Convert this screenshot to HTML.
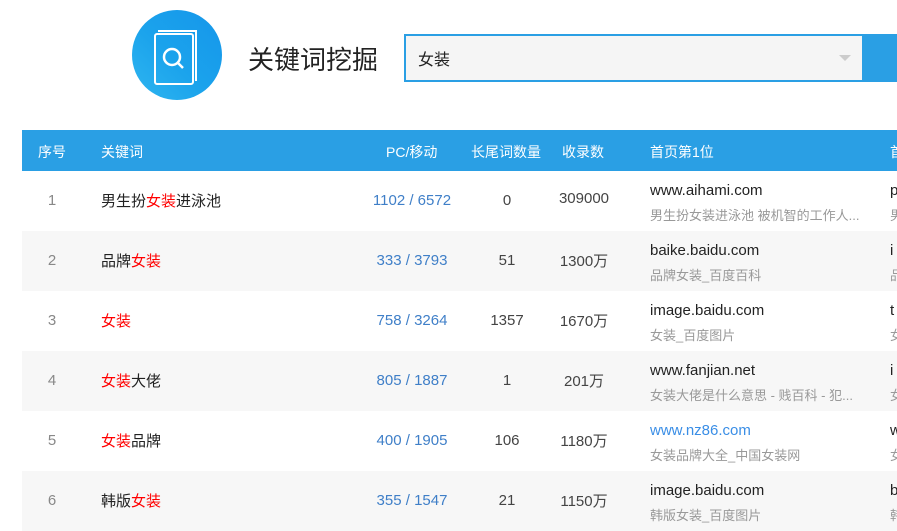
<!DOCTYPE html>
<html><head><meta charset="utf-8"><style>
*{margin:0;padding:0;box-sizing:border-box}
body{width:897px;height:517px;overflow:hidden;background:#fff;font-family:"Liberation Sans","Noto Sans CJK SC",sans-serif;position:relative}
.logo{position:absolute;left:132px;top:10px;width:90px;height:90px;border-radius:50%;background:linear-gradient(225deg,#1596ea,#1ba3ec 55%,#2fb6f0)}
.title{position:absolute;left:248px;top:40px;font-size:26px;color:#222}
.box{position:absolute;left:404px;top:34px;width:500px;height:48px;background:#2a9fe4}
.inp{position:absolute;left:2px;top:2px;width:456px;height:44px;background:#f5f5f5;font-size:16px;color:#222;padding:10px 0 0 12px}
.arr{position:absolute;left:433px;top:19px;border-left:6px solid transparent;border-right:6px solid transparent;border-top:6px solid #ccc}
.tbl{position:absolute;left:22px;top:130px;width:900px}
.hd{height:41px;background:#2a9fe4;color:#fff;font-size:14px;position:relative}
.row{height:60px;position:relative;font-size:15px;color:#222}
.row:nth-child(even){background:#f7f7f7}
.c{position:absolute;white-space:nowrap}
.hd .c{top:12px}
.row .c{top:19px}
.row .n,.row .pc,.row .lt{top:21px}
.n{color:#888;width:60px;text-align:center;left:0;font-size:15px}
.k{left:79px}
.pc{left:330px;width:120px;text-align:center;color:#3f7fc8;font-size:15px}
.lt{left:445px;width:80px;text-align:center;color:#444;font-size:15px}
.sl{left:522px;width:80px;text-align:center;color:#444;font-size:15px}
.row .u{left:628px;top:11px;font-size:15px}
.d{position:absolute;left:628px;top:34px;font-size:13px;color:#999;white-space:nowrap}
.row .u2{left:868px;top:11px}
.d2{position:absolute;left:868px;top:34px;font-size:13px;color:#999}
r{color:#f00}
</style></head><body>
<div class="logo"><svg width="90" height="90" viewBox="0 0 90 90"><path d="M26 21h38v50" fill="none" stroke="#fff" stroke-width="2"/><rect x="23" y="24" width="38" height="50" rx="2" fill="none" stroke="#fff" stroke-width="2"/><circle cx="40" cy="47" r="8" fill="none" stroke="#fff" stroke-width="2.5"/><path d="M46 53l5 5" stroke="#fff" stroke-width="2.5"/></svg></div>
<div class="title">关键词挖掘</div>
<div class="box"><div class="inp">女装<div class="arr"></div></div></div>
<div class="tbl">
<div class="hd"><span class="c" style="left:16px">序号</span><span class="c" style="left:79px">关键词</span><span class="c" style="left:364px">PC/移动</span><span class="c" style="left:449px">长尾词数量</span><span class="c" style="left:540px">收录数</span><span class="c" style="left:628px">首页第1位</span><span class="c" style="left:868px">首</span></div>
<div>
<div class="row"><span class="c n">1</span><span class="c k">男生扮<r>女装</r>进泳池</span><span class="c pc">1102 / 6572</span><span class="c lt">0</span><span class="c sl">309000</span><span class="c u">www.aihami.com</span><span class="d">男生扮女装进泳池 被机智的工作人...</span><span class="c u2">p</span><span class="d2">男</span></div>
<div class="row"><span class="c n">2</span><span class="c k">品牌<r>女装</r></span><span class="c pc">333 / 3793</span><span class="c lt">51</span><span class="c sl">1300万</span><span class="c u">baike.baidu.com</span><span class="d">品牌女装_百度百科</span><span class="c u2">i</span><span class="d2">品</span></div>
<div class="row"><span class="c n">3</span><span class="c k"><r>女装</r></span><span class="c pc">758 / 3264</span><span class="c lt">1357</span><span class="c sl">1670万</span><span class="c u">image.baidu.com</span><span class="d">女装_百度图片</span><span class="c u2">t</span><span class="d2">女</span></div>
<div class="row"><span class="c n">4</span><span class="c k"><r>女装</r>大佬</span><span class="c pc">805 / 1887</span><span class="c lt">1</span><span class="c sl">201万</span><span class="c u">www.fanjian.net</span><span class="d">女装大佬是什么意思 - 贱百科 - 犯...</span><span class="c u2">i</span><span class="d2">女</span></div>
<div class="row"><span class="c n">5</span><span class="c k"><r>女装</r>品牌</span><span class="c pc">400 / 1905</span><span class="c lt">106</span><span class="c sl">1180万</span><span class="c u" style="color:#3a8ee6">www.nz86.com</span><span class="d">女装品牌大全_中国女装网</span><span class="c u2">w</span><span class="d2">女</span></div>
<div class="row"><span class="c n">6</span><span class="c k">韩版<r>女装</r></span><span class="c pc">355 / 1547</span><span class="c lt">21</span><span class="c sl">1150万</span><span class="c u">image.baidu.com</span><span class="d">韩版女装_百度图片</span><span class="c u2">b</span><span class="d2">韩</span></div>
</div></div>
</body></html>
